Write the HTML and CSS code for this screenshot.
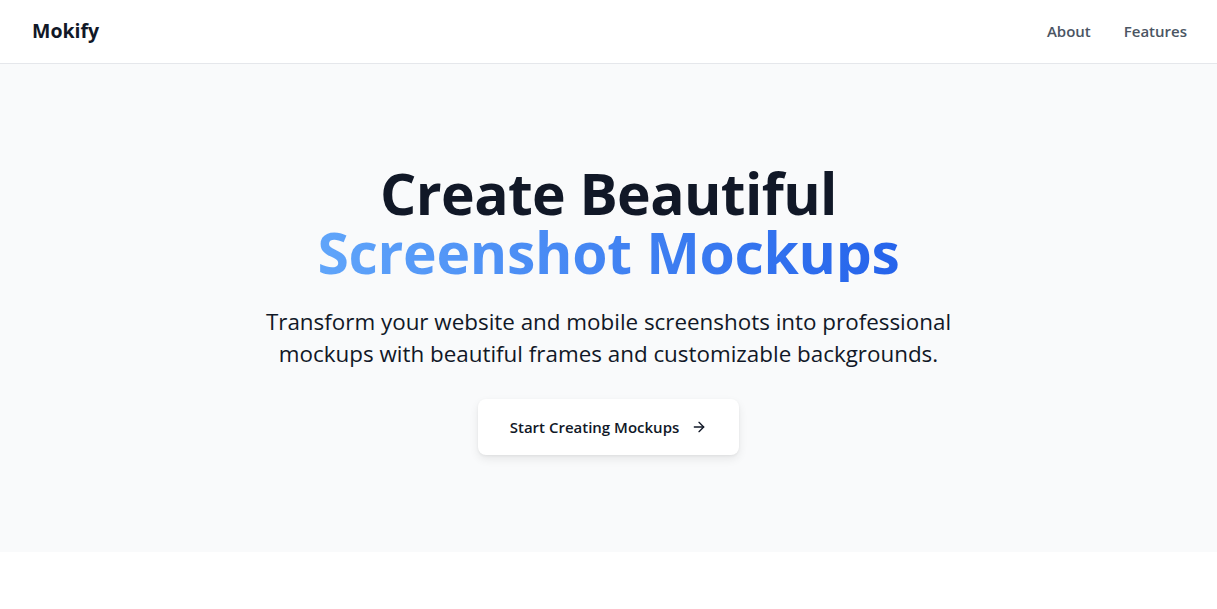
FILE: index.html
```html
<!DOCTYPE html>
<html lang="en">
<head>
<meta charset="utf-8">
<title>Mokify</title>
<link rel="stylesheet" href="styles.css">
</head>
<body>
<header class="nav">
  <div class="brand">Mokify</div>
  <nav class="links">
    <a href="#">About</a>
    <a href="#">Features</a>
  </nav>
</header>
<main class="hero">
  <h1 class="title">
    <span class="line1">Create Beautiful</span>
    <span class="line2">Screenshot Mockups</span>
  </h1>
  <p class="lead">Transform your website and mobile screenshots into professional mockups with beautiful frames and customizable backgrounds.</p>
  <a class="cta" href="#">Start Creating Mockups
    <svg width="16" height="16" viewBox="0 0 24 24" fill="none" stroke="currentColor" stroke-width="2" stroke-linecap="round" stroke-linejoin="round"><path d="M5 12h14"/><path d="M12 5l7 7-7 7"/></svg>
  </a>
</main>
</body>
</html>
```
FILE: styles.css
```css
* { box-sizing: border-box; }
html, body { margin: 0; padding: 0; }
body {
  font-family: "Open Sans", "Noto Sans", sans-serif;
  background: #ffffff;
  color: #111827;
}
.nav {
  height: 64px;
  display: flex;
  align-items: center;
  justify-content: space-between;
  padding: 0 30px 2px 32px;
  border-bottom: 1px solid #e5e7eb;
  box-shadow: 0 1px 2px rgba(0,0,0,0.04);
  background: #fff;
}
.brand {
  font-size: 19.5px;
  font-weight: 700;
  color: #111827;
}
.links { display: flex; gap: 33px; }
.links a {
  text-decoration: none;
  color: #4b5563;
  font-size: 15px;
  font-weight: 600;
}
.hero {
  background: #f9fafb;
  height: 488px;
  display: flex;
  flex-direction: column;
  align-items: center;
  padding-top: 100px;
}
.title {
  margin: 0;
  font-size: 57px;
  line-height: 59px;
  font-weight: 700;
  text-align: center;
  letter-spacing: -0.6px;
}
.title span { display: block; }
.line1 { color: #111827; }
.line2 {
  background: linear-gradient(90deg, #60a5fa, #2563eb);
  -webkit-background-clip: text;
  background-clip: text;
  color: transparent;
  width: fit-content;
  margin: 0 auto;
  letter-spacing: -0.3px;
}
.lead {
  margin: 24px 0 0;
  max-width: 720px;
  text-align: center;
  font-size: 22.4px;
  line-height: 32px;
  color: #111827;
}
.cta {
  margin-top: 29px;
  display: flex;
  align-items: center;
  gap: 12px;
  height: 56px;
  padding: 0 32px;
  background: #fff;
  border-radius: 8px;
  box-shadow: 0 4px 10px rgba(0,0,0,0.08), 0 1px 3px rgba(0,0,0,0.05);
  text-decoration: none;
  color: #111827;
  font-size: 15px;
  font-weight: 600;
}
```
